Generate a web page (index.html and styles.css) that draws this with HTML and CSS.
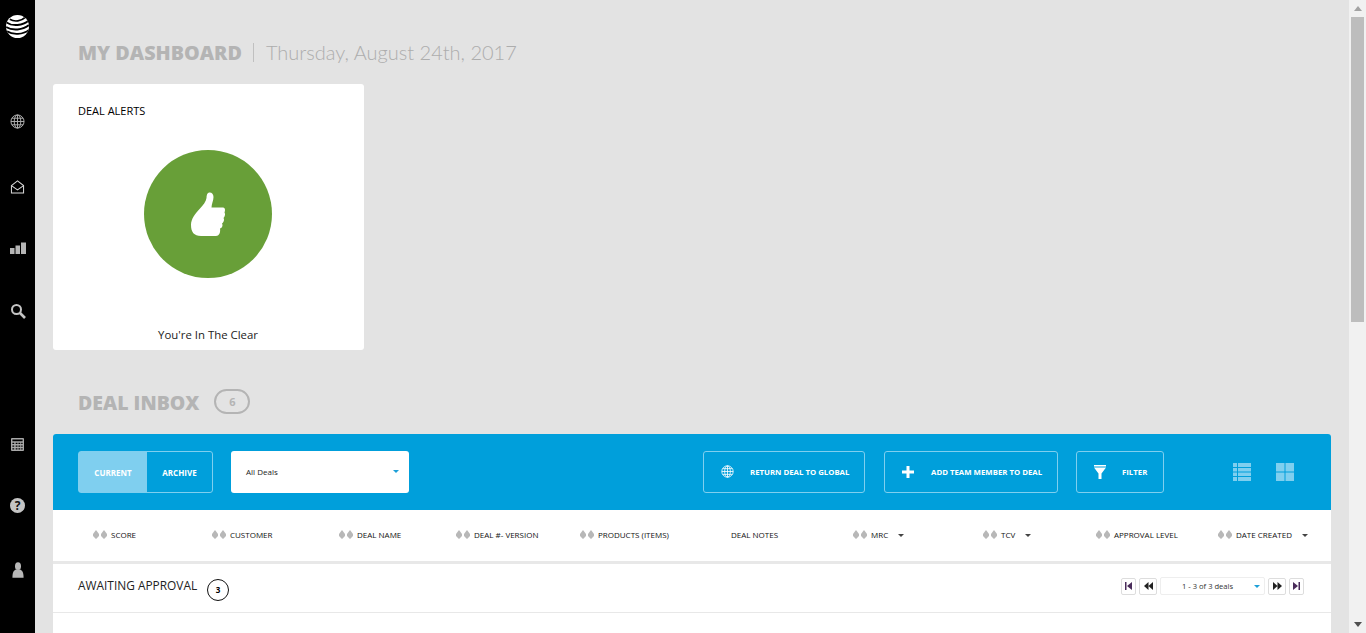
FILE: index.html
```html
<!DOCTYPE html>
<html lang="en">
<head>
    <meta charset="UTF-8">
    <meta name="viewport" content="width=device-width, initial-scale=1.0">
    <title>My Dashboard</title>
    <link rel="stylesheet" href="styles.css">
</head>
<body>
    <aside class="sidebar">
        <svg class="logo" width="23" height="23" viewBox="0 0 24 24">
            <defs><clipPath id="globe-clip"><circle cx="12" cy="12" r="12"/></clipPath></defs>
            <circle cx="12" cy="12" r="12" fill="#fff"/>
            <g clip-path="url(#globe-clip)" fill="none" stroke="#000">
                <path d="M4 4.500C9 7.500 16 6.500 20 2.500" stroke-width="1.800"/>
                <path d="M0 7.500C6 12 18 11.500 24 5.500" stroke-width="2"/>
                <path d="M0 12.500C6 16.500 18 16 24 10.500" stroke-width="2"/>
                <path d="M1 17C7 21 18 20.500 24 15.500" stroke-width="1.800"/>
            </g>
        </svg>
        <div class="nav-group nav-top">
            <svg class="nav-icon" width="15" height="15" viewBox="0 0 16 16" fill="none" stroke="#b0b0b0">
                <circle cx="8" cy="8" r="7"/><ellipse cx="8" cy="8" rx="3.500" ry="7"/>
                <path d="M8 1v14M1 8h14M2 4.500h12M2 11.500h12"/>
            </svg>
            <svg class="nav-icon nav-inbox" width="15" height="14" viewBox="0 0 16 15" fill="none" stroke="#d9d9d9" stroke-width="1.100">
                <path d="M1.500 6L8 1l6.500 5v8h-13z"/><path d="M1.500 6L8 10.500 14.500 6"/>
            </svg>
            <svg class="nav-icon nav-bars" width="16" height="12" viewBox="0 0 16 12" fill="#b5b5b5">
                <rect y="6" width="4.500" height="6"/><rect x="5.500" y="3.500" width="4.500" height="8.500"/><rect x="11" y="0.500" width="5" height="11.500"/>
            </svg>
            <svg class="nav-icon nav-search" width="16" height="15" viewBox="0 0 16 15" fill="none" stroke="#c4c4c4">
                <circle cx="6.500" cy="5.500" r="4.500" stroke-width="2"/><path d="M10 9l5 5" stroke-width="2.600"/>
            </svg>
        </div>
        <div class="nav-group nav-bottom">
            <svg class="nav-icon" width="13" height="13" viewBox="0 0 14 14" fill="#a8a8a8">
                <path d="M1 0h12a1 1 0 0 1 1 1v12a1 1 0 0 1-1 1H1a1 1 0 0 1-1-1V1a1 1 0 0 1 1-1zm.5 1.500v2h11v-2zm0 3.500v1.500h2V5zm3.500 0v1.500h2V5zm3 0v1.500h2V5zm3 0v1.500h1.500V5zM1.500 8v1.500h2V8zM5 8v1.500h2V8zm3 0v1.500h2V8zm3 0v1.500h1.500V8zm-9.500 3v1.500h2V11zM5 11v1.500h2V11zm3 0v1.500h2V11zm3 0v1.500h1.500V11z" fill-rule="evenodd"/>
            </svg>
            <div class="help-icon">?</div>
            <svg class="nav-icon nav-user" width="12" height="16" viewBox="0 0 14 18" fill="#b8b8b8">
                <ellipse cx="7" cy="4.500" rx="3.500" ry="4.500"/><path d="M4.500 8.500h5C12 9.500 13.500 12 13.500 18H.5C.5 12 2 9.500 4.500 8.500z"/>
            </svg>
        </div>
    </aside>

    <main class="content">
        <h1 class="page-title"><b>MY DASHBOARD</b><span class="title-date">Thursday, August 24th, 2017</span></h1>

        <section class="alert-card">
            <h2 class="card-title">DEAL ALERTS</h2>
            <div class="alert-circle">
                <svg width="34" height="44" viewBox="0 0 34 44" fill="#fff">
                    <path d="M18 .5C20.500 0 22.500 2 22.500 5C22.500 8.500 20.500 12 20.500 15.500L32 15.500C34 15.500 34.500 18 33.500 20.500C34.500 22 34 24.500 32.500 26C33.500 27.500 33 30 31 31.500C32 33 31.500 35.500 29 36.500C29.500 39 29 44 25 44L10 44C3 44 0 40 0 33C0 27 4 22 9 16.500C12 13 15 10 15.500 6C15.500 3.500 16 1 18 .5Z"/>
                </svg>
            </div>
            <p class="alert-text">You're In The Clear</p>
        </section>

        <h2 class="inbox-title"><b>DEAL INBOX</b><span class="inbox-count">6</span></h2>

        <section class="inbox">
            <div class="toolbar">
                <div class="toggle">
                    <span class="toggle-item active">CURRENT</span>
                    <span class="toggle-item">ARCHIVE</span>
                </div>
                <div class="deal-select">All Deals<i class="caret caret-blue"></i></div>
                <div class="toolbar-actions">
                    <a class="tool-btn btn-return" href="#">
                        <svg width="13" height="13" viewBox="0 0 16 16" fill="none" stroke="#fff">
                            <circle cx="8" cy="8" r="7"/><ellipse cx="8" cy="8" rx="3.500" ry="7"/>
                            <path d="M8 1v14M1 8h14M2 4.500h12M2 11.500h12"/>
                        </svg>
                        RETURN DEAL TO GLOBAL
                    </a>
                    <a class="tool-btn btn-add" href="#">
                        <svg width="14" height="14" viewBox="0 0 14 14" fill="#fff"><path d="M5.500 1h3v4.500H13v3H8.500V13h-3V8.500H1v-3h4.500z"/></svg>
                        ADD TEAM MEMBER TO DEAL
                    </a>
                    <a class="tool-btn btn-filter" href="#">
                        <svg width="14" height="16" viewBox="0 0 14 16" fill="#fff"><path d="M1 1h12v1.500H1zM1 3.500h12L8.500 9.500V15h-3V9.500z"/></svg>
                        FILTER
                    </a>
                </div>
                <div class="view-switch">
                    <svg width="18" height="18" viewBox="0 0 18 18" fill="#7fcfef">
                        <path d="M0 0h4v4H0zM5 0h13v4H5zM0 5h4v3.500H0zM5 5h13v3.500H5zM0 9.500h4V13H0zM5 9.500h13V13H5zM0 14h4v4H0zM5 14h13v4H5z"/>
                    </svg>
                    <svg width="18" height="18" viewBox="0 0 18 18" fill="#7fcfef">
                        <rect width="8.500" height="8.500"/><rect x="9.500" width="8.500" height="8.500"/><rect y="9.500" width="8.500" height="8.500"/><rect x="9.500" y="9.500" width="8.500" height="8.500"/>
                    </svg>
                </div>
            </div>

            <div class="table-head">
                <span class="col"><i class="sort"></i>SCORE</span>
                <span class="col"><i class="sort"></i>CUSTOMER</span>
                <span class="col"><i class="sort"></i>DEAL NAME</span>
                <span class="col"><i class="sort"></i>DEAL #- VERSION</span>
                <span class="col"><i class="sort"></i>PRODUCTS (ITEMS)</span>
                <span class="col">DEAL NOTES</span>
                <span class="col"><i class="sort"></i>MRC<i class="caret caret-dark"></i></span>
                <span class="col"><i class="sort"></i>TCV<i class="caret caret-dark"></i></span>
                <span class="col"><i class="sort"></i>APPROVAL LEVEL</span>
                <span class="col"><i class="sort"></i>DATE CREATED<i class="caret caret-dark"></i></span>
            </div>

            <div class="group-row">
                <span class="group-name">AWAITING APPROVAL</span>
                <span class="group-count">3</span>
                <div class="pager">
                    <a class="page-btn page-narrow" href="#"><svg width="7" height="8" viewBox="0 0 7 8"><path d="M0 0h1.500v8H0zM7 0v8L2 4z" fill="#4a2c5a"/></svg></a>
                    <a class="page-btn" href="#"><svg width="9" height="8" viewBox="0 0 9 8"><path d="M4.500 0v8L0 4zM9 0v8L4.500 4z" fill="#222"/></svg></a>
                    <div class="page-select">1 - 3 of 3 deals<i class="caret caret-blue"></i></div>
                    <a class="page-btn" href="#"><svg width="9" height="8" viewBox="0 0 9 8"><path d="M0 0v8l4.500-4zM4.500 0v8L9 4z" fill="#222"/></svg></a>
                    <a class="page-btn page-narrow" href="#"><svg width="7" height="8" viewBox="0 0 7 8"><path d="M7 0H5.500v8H7zM0 0v8l5-4z" fill="#4a2c5a"/></svg></a>
                </div>
            </div>
            <div class="rows"></div>
        </section>
    </main>

    <div class="scrollbar">
        <i class="arrow arrow-up"></i>
        <div class="scroll-track"><div class="scroll-thumb"></div></div>
        <i class="arrow arrow-down"></i>
    </div>
</body>
</html>
```

FILE: styles.css
```css
html, body {
    height: 100%;
}
body {
    margin: 0;
    height: 633px;
    display: flex;
    overflow: hidden;
    font-family: 'Open Sans', sans-serif;
    background-color: #e3e3e3;
    color: #000;
}
a {
    text-decoration: none;
    color: inherit;
}

/* left rail */
.sidebar {
    width: 35px;
    flex: none;
    background-color: #000;
    display: flex;
    flex-direction: column;
    align-items: center;
}
.logo {
    margin-top: 15px;
}
.nav-group {
    display: flex;
    flex-direction: column;
    align-items: center;
}
.nav-top {
    margin-top: 76px;
}
.nav-inbox {
    margin-top: 51px;
}
.nav-bars {
    margin-top: 48px;
}
.nav-search {
    margin-top: 50px;
}
.nav-bottom {
    margin-top: 119px;
}
.nav-icon {
    display: block;
}
.help-icon {
    width: 15px;
    height: 15px;
    margin-top: 47px;
    border-radius: 50%;
    background-color: #c4c4c4;
    color: #111;
    font-size: 12px;
    font-weight: 700;
    line-height: 15px;
    text-align: center;
}
.nav-user {
    margin-top: 49px;
}

/* main column */
.content {
    flex: 1;
    min-width: 0;
    padding: 0 18px;
    box-sizing: border-box;
}
.page-title {
    margin: 40px 0 0 25px;
    height: 44px;
    font-size: 19.750px;
    font-weight: 400;
    line-height: 26px;
    color: #b4b4b4;
    display: flex;
    align-items: flex-start;
}
.page-title b {
    font-weight: 800;
}
.title-date {
    font-family: 'Lato', sans-serif;
    font-weight: 300;
    font-size: 20px;
    color: #adadad;
    margin-left: 11px;
    padding-left: 12px;
    border-left: 1px solid #c0c0c0;
    height: 19px;
    line-height: 19px;
    margin-top: 3px;
}
.alert-card {
    width: 311px;
    height: 266px;
    box-sizing: border-box;
    padding-right: 1px;
    background-color: #fff;
    border-radius: 3px;
    display: flex;
    flex-direction: column;
    align-items: center;
}
.card-title {
    margin: 19px 0 0;
    align-self: flex-start;
    padding-left: 25px;
    font-size: 11px;
    font-weight: 400;
    line-height: 15px;
    color: #000;
}
.alert-circle {
    width: 128px;
    height: 128px;
    margin-top: 32px;
    border-radius: 50%;
    background-color: #689f38;
    display: flex;
    align-items: center;
    justify-content: center;
}
.alert-text {
    margin: 49px 0 0;
    font-size: 11.400px;
    line-height: 16px;
    color: #222;
}
.inbox-title {
    margin: 40px 0 0 25px;
    height: 44px;
    font-size: 19.500px;
    line-height: 26px;
    color: #b4b4b4;
    display: flex;
    align-items: flex-start;
}
.inbox-title b {
    font-weight: 800;
}
.inbox-count {
    width: 32px;
    height: 21px;
    margin: -1px 0 0 15px;
    border: 2px solid #b4b4b4;
    border-radius: 13px;
    font-size: 11px;
    font-weight: 700;
    line-height: 21px;
    text-align: center;
}

/* inbox panel */
.inbox {
    background-color: #fff;
    border-radius: 3px 3px 0 0;
    height: 199px;
}
.toolbar {
    height: 76px;
    background-color: #009fdb;
    border-radius: 3px 3px 0 0;
    display: flex;
    align-items: center;
    padding: 0 37px 0 25px;
    box-sizing: border-box;
}
.toggle {
    width: 135px;
    height: 42px;
    box-sizing: border-box;
    border: 1px solid #7fcfef;
    border-radius: 3px;
    display: flex;
    color: #fff;
    font-size: 8px;
    font-weight: 700;
}
.toggle-item {
    flex: 1;
    display: flex;
    align-items: center;
    justify-content: center;
}
.toggle-item.active {
    background-color: #7fcfef;
    flex: none;
    width: 68px;
}
.deal-select {
    width: 178px;
    height: 42px;
    box-sizing: border-box;
    margin-left: 18px;
    padding: 0 10px 2px 15px;
    background-color: #fff;
    border-radius: 3px;
    display: flex;
    align-items: center;
    justify-content: space-between;
    font-size: 8px;
    color: #222;
}
.toolbar-actions {
    display: flex;
    gap: 19px;
    margin-left: auto;
}
.tool-btn {
    height: 42px;
    box-sizing: border-box;
    padding-bottom: 1px;
    border: 1px solid #7fcfef;
    border-radius: 3px;
    display: flex;
    align-items: center;
    color: #fff;
    font-size: 7.800px;
    font-weight: 700;
    white-space: nowrap;
}
.btn-return {
    width: 162px;
    padding-left: 17px;
    gap: 16px;
}
.btn-add {
    width: 174px;
    padding-left: 16px;
    gap: 16px;
}
.btn-filter {
    width: 88px;
    margin-left: -1px;
    padding-left: 16px;
    gap: 15px;
}
.view-switch {
    display: flex;
    gap: 25px;
    margin-left: 69px;
}
.view-switch svg {
    display: block;
}

/* column headers */
.table-head {
    height: 49px;
    padding-left: 40px;
    padding-bottom: 2px;
    border-bottom: 3px solid #e8e8e8;
    display: grid;
    grid-template-columns: 119px 127px 117px 124px 151px 122px 130px 113px 122px 1fr;
    align-items: center;
    font-size: 8px;
    color: #111;
}
.col {
    display: flex;
    align-items: center;
    white-space: nowrap;
}
.sort {
    width: 14px;
    height: 9px;
    margin-right: 4px;
    background-color: #b8b8b8;
    clip-path: polygon(3px 0, 6px 4px, 6px 6px, 3px 9px, 0 6px, 0 4px, 3px 0, 11px 0, 14px 4px, 14px 6px, 11px 9px, 8px 6px, 8px 4px, 11px 0);
}
.caret {
    width: 0;
    height: 0;
    border-left: 3.500px solid transparent;
    border-right: 3.500px solid transparent;
    border-top: 3.500px solid #444;
}
.caret-dark {
    margin: 1px 0 0 10px;
}
.caret-blue {
    border-top-color: #1d9fd8;
}

/* group row */
.group-row {
    height: 48px;
    border-bottom: 1px solid #e8e8e8;
    display: flex;
    align-items: flex-start;
    padding: 0 27px 0 25px;
}
.group-name {
    margin-top: 13px;
    font-size: 11.900px;
    line-height: 16px;
    color: #222;
}
.group-count {
    width: 20px;
    height: 20px;
    margin: 15px 0 0 10px;
    border: 1px solid #111;
    border-radius: 50%;
    font-size: 8px;
    font-weight: 700;
    line-height: 20px;
    text-align: center;
}
.pager {
    margin: 13px 0 0 auto;
    display: flex;
    align-items: center;
    gap: 3px;
}
.page-btn {
    width: 16px;
    height: 15px;
    border: 1px solid #ddd;
    border-radius: 2px;
    display: flex;
    align-items: center;
    justify-content: center;
}
.page-btn.page-narrow {
    width: 13px;
}
.page-select {
    width: 78px;
    height: 16px;
    border: 1px solid #eee;
    border-radius: 2px;
    padding: 0 4px 0 21px;
    display: flex;
    align-items: center;
    justify-content: space-between;
    font-size: 7.600px;
    color: #333;
}

/* fake browser scrollbar */
.scrollbar {
    width: 17px;
    flex: none;
    background-color: #f1f1f1;
    display: flex;
    flex-direction: column;
    align-items: center;
}
.arrow {
    width: 0;
    height: 0;
    margin: 6px 0;
    border-left: 4px solid transparent;
    border-right: 4px solid transparent;
}
.arrow-up {
    border-bottom: 5px solid #a3a3a3;
}
.arrow-down {
    border-top: 5px solid #505050;
}
.scroll-track {
    flex: 1;
    align-self: stretch;
}
.scroll-thumb {
    height: 305px;
    margin: 0 2px;
    background-color: #bdbdbd;
}
```
